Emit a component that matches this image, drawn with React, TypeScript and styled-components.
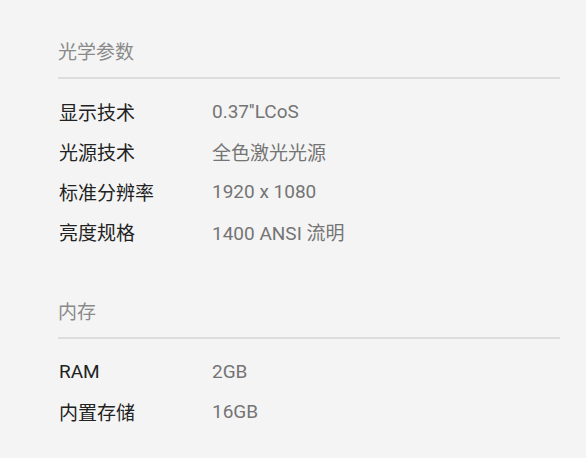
import styled, { createGlobalStyle } from "styled-components"

type Spec = { label: string; value: string }
type Group = { title: string; items: Spec[] }

const groups: Group[] = [
  {
    title: "光学参数",
    items: [
      { label: "显示技术", value: "0.37''LCoS" },
      { label: "光源技术", value: "全色激光光源" },
      { label: "标准分辨率", value: "1920 x 1080" },
      { label: "亮度规格", value: "1400 ANSI 流明" },
    ],
  },
  {
    title: "内存",
    items: [
      { label: "RAM", value: "2GB" },
      { label: "内置存储", value: "16GB" },
    ],
  },
]

const GlobalStyle = createGlobalStyle`
  html, body {
    margin: 0;
    background: #f4f4f4;
  }
  body {
    font-family: Roboto, "Noto Sans CJK SC", sans-serif;
  }
`

export default function App() {
  return (
    <>
      <GlobalStyle />
      <Page>
        {groups.map((g) => (
          <Section key={g.title}>
            <Title>{g.title}</Title>
            <Divider />
            <List>
              {g.items.map((s) => (
                <Row key={s.label}>
                  <Label>{s.label}</Label>
                  <Value>{s.value}</Value>
                </Row>
              ))}
            </List>
          </Section>
        ))}
      </Page>
    </>
  )
}

const Page = styled.div`
  width: 586px;
  height: 458px;
  box-sizing: border-box;
  padding: 39px 26px 0 58px;
  display: flex;
  flex-direction: column;
  gap: 48px;
`

const Section = styled.section`
  display: flex;
  flex-direction: column;
`

const Title = styled.h3`
  margin: 0;
  font-size: 19px;
  line-height: 28px;
  font-weight: 400;
  color: #8a8a8a;
`

const Divider = styled.div`
  height: 2px;
  background: #dddddd;
  margin-top: 10px;
  margin-bottom: 12px;
`

const List = styled.div`
  display: flex;
  flex-direction: column;
`

const Row = styled.div`
  display: flex;
  align-items: center;
  height: 40px;
  font-size: 19px;
`

const Label = styled.span`
  width: 153px;
  padding-left: 1px;
  color: #222222;
`

const Value = styled.span`
  color: #747474;
`
